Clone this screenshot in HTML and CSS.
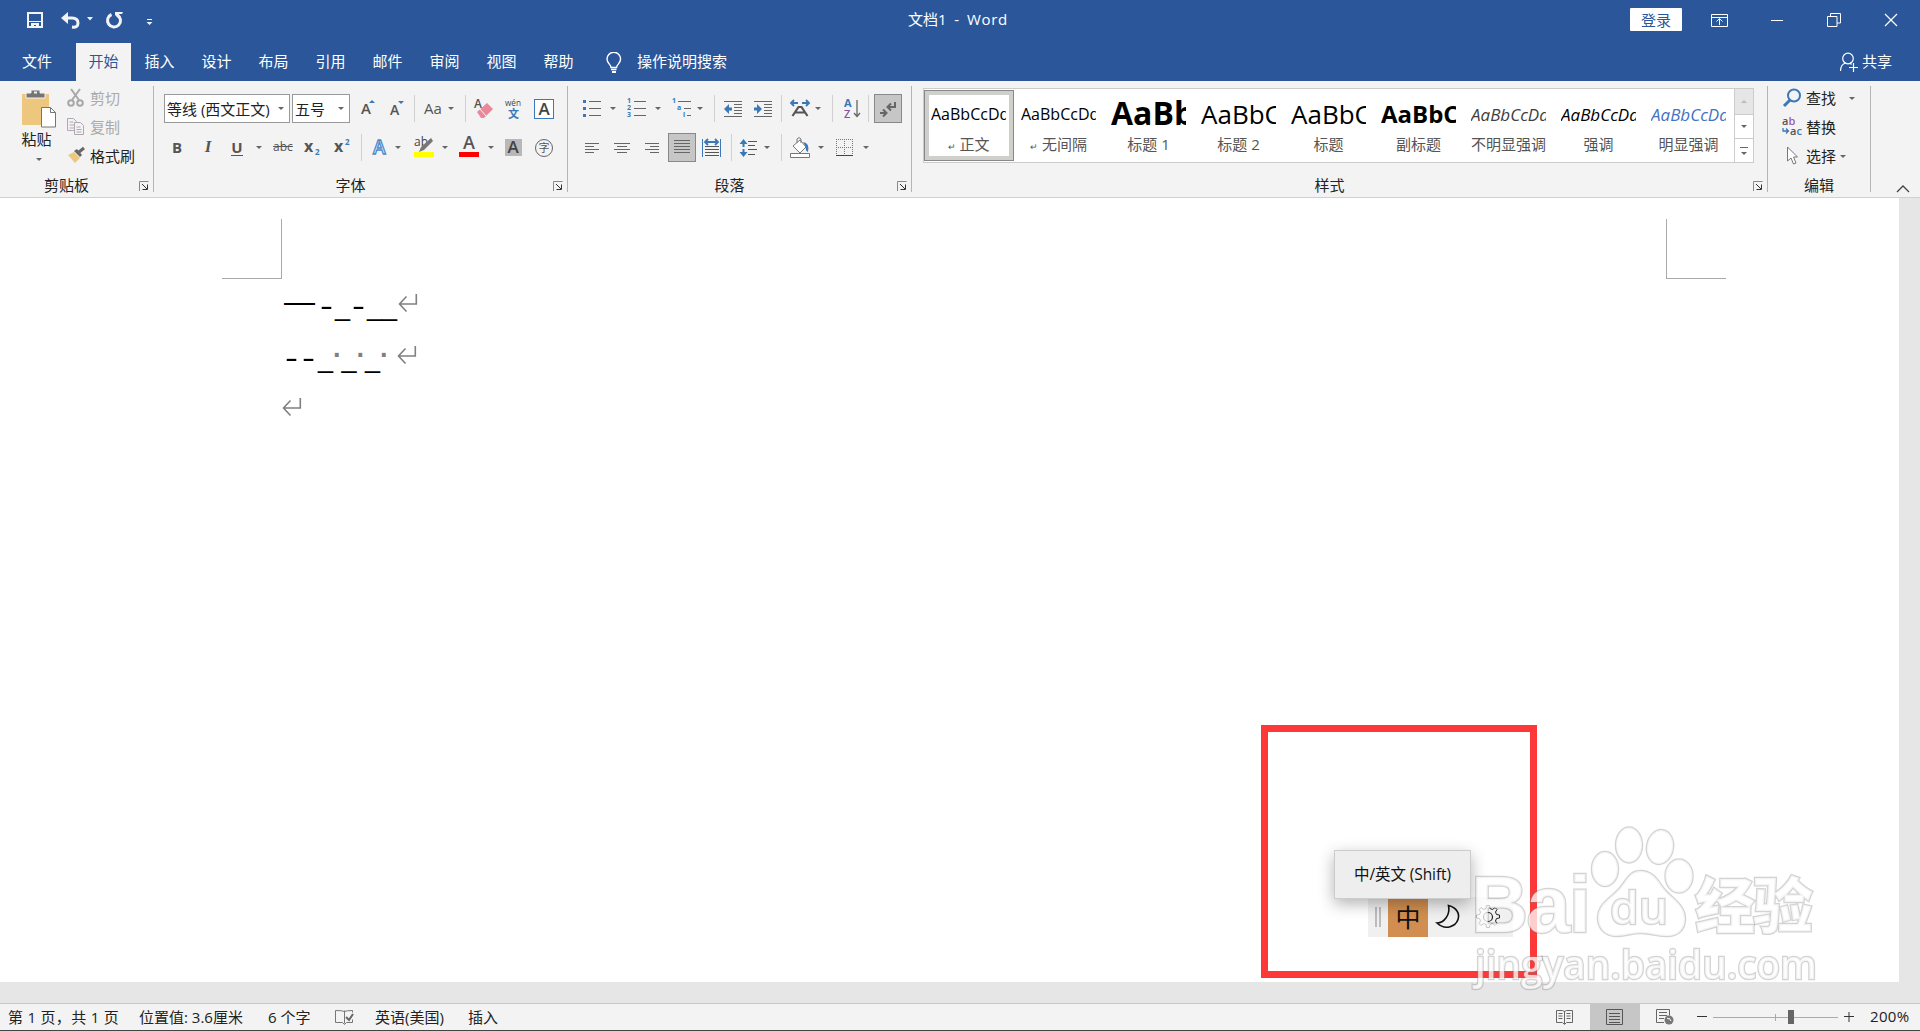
FILE: index.html
```html
<!DOCTYPE html>
<html lang="zh-CN">
  <head>
    <meta charset="UTF-8" />
    <title>文档1 - Word</title>
    <link rel="stylesheet" href="styles.css">
  </head>

  <body>
    <header class="titlebar">
      <div class="quick">
        <svg width="160" height="43" fill="none" stroke="#f3f3f3">
          <path d="M28 13h14v14h-14z" stroke-width="2" />
          <path d="M29 21.500h12" stroke-width="1" />
          <path d="M31 23h8v4h-3v-2h-2v2h-3z" fill="#f3f3f3" stroke="none" />
          <path d="M64 18h8q6 0 6 5t-6 4" stroke-width="3" />
          <path d="M61 18l7-6v12z" fill="#f3f3f3" stroke="none" />
          <path d="M87 17h6l-3 3.500z" fill="#f3f3f3" stroke="none" />
          <path d="M111.500 14.500a6.500 6.500 0 1 0 6 0.500" stroke-width="3" />
          <path d="M115 12h8l-1 2h-3l1 6l-5-5z" fill="#f3f3f3" stroke="none" />
          <path d="M147 19.500h5" stroke-width="1" />
          <path d="M146.500 22h6l-3 3z" fill="#f3f3f3" stroke="none" />
        </svg>
      </div>
      <div class="doc-name">文档1&nbsp; - &nbsp;<span>Word</span></div>
      <div class="win-tools">
        <button class="login">登录</button>
        <svg width="18" height="16" fill="none" stroke="#fff"><path d="M.5 2.500h16v12h-16zM.5 5.500h16M8.500 13V7M5.500 9.500l3-3 3 3" /></svg>
        <svg width="14" height="16"><path d="M1 8.500h12" stroke="#fff" /></svg>
        <svg width="14" height="16" fill="none" stroke="#fff"><path d="M.5 4.500h9.500v10h-9.500zM3.500 4.500v-3h10v9.500h-3.500" /></svg>
        <svg width="14" height="16"><path d="M1 2l12 12M13 2l-12 12" stroke="#fff" stroke-width="1.200" /></svg>
      </div>
    </header>

    <nav class="tabs">
      <span class="tab file">文件</span>
      <span class="tab active">开始</span>
      <span class="tab">插入</span>
      <span class="tab">设计</span>
      <span class="tab">布局</span>
      <span class="tab">引用</span>
      <span class="tab">邮件</span>
      <span class="tab">审阅</span>
      <span class="tab">视图</span>
      <span class="tab">帮助</span>
      <svg class="bulb" width="16" height="22" fill="none" stroke="#fff" stroke-width="1.400"><path d="M5 15.500c0-3-4-4-4-8.500a6.800 6.800 0 0 1 13.600 0c0 4.500-4 5.500-4 8.500zM5 17.500h5.500" /><path d="M6 20h4" stroke-width="2" /></svg>
      <span class="tell-me">操作说明搜索</span>
      <span class="share">
        <svg width="20" height="20" fill="none" stroke="#fff" stroke-width="1.200"><circle cx="9" cy="6.500" r="5.300" /><path d="M1.500 19c0-4 2-7 5-8M11 11l1.500 1.500M14.500 11v9M10 15.500h9" /></svg>
        共享
      </span>
    </nav>

    <section class="ribbon">
      <!-- 剪贴板 -->
      <div class="group clipboard">
        <div class="clip-body">
          <div class="paste">
            <svg width="36" height="40">
              <path d="M1 5h27v31h-27z" fill="#eec77f" />
              <path d="M5 9v-5h5v-3h9v3h5v5z" fill="#757575" stroke="#f3f3f3" />
              <path d="M13 3.500h3" stroke="#f3f3f3" stroke-width="2" />
              <path d="M20.500 18.500h9l5 5v14.500h-14z" fill="#fff" stroke="#757575" />
              <path d="M29.500 18.500v5h5" fill="none" stroke="#757575" />
            </svg>
            <span>粘贴</span>
            <i class="caret"></i>
          </div>
          <ul class="clip-list">
            <li class="off">
              <svg width="18" height="20" fill="none" stroke="#a8a8a8" stroke-width="2"><circle cx="4" cy="15" r="2.800" /><circle cx="13" cy="15" r="2.800" /><path d="M5 12l8-11M12 12l-8-11" /></svg>
              剪切
            </li>
            <li class="off">
              <svg width="18" height="20" fill="#f3f3f3" stroke="#b0a8b0"><path d="M.5 1.500h6l3 3v9h-9zM2.500 5h4M2.500 8h5M2.500 11h5" /><path d="M7.500 5.500h6l3 3v9h-9zM9.500 10h4M9.500 12.500h5M9.500 15h5" /></svg>
              复制
            </li>
            <li>
              <svg width="18" height="20"><path d="M1 9l6-3 6 6-5 5z" fill="#eec77f" /><path d="M7 5l3-2 5 6-2 2z" fill="#666" /><path d="M12 6l5-4" stroke="#666" stroke-width="3" /></svg>
              格式刷
            </li>
          </ul>
        </div>
        <div class="label"><span>剪贴板</span><svg class="launch" width="12" height="12"><use href="#launch" /></svg></div>
      </div>

      <!-- 字体 -->
      <div class="group font">
        <div class="row font-row1">
          <span class="combo">等线 (西文正文)<i class="caret"></i></span>
          <span></span>
          <span class="combo">五号<i class="caret"></i></span>
          <svg width="32" height="28"><text class="ico" x="11" y="19" font-size="15">A</text><path d="M19 8h6l-3-3z" fill="#3a78b8" /></svg>
          <svg width="28" height="28"><text class="ico" x="8" y="20" font-size="14">A</text><path d="M16 6h6l-3 3z" fill="#3a78b8" /></svg>
          <i class="sep"></i>
          <span class="ico-text">Aa</span>
          <i class="caret"></i>
          <i class="sep"></i>
          <svg width="22" height="28"><text class="ico" x="1" y="13" font-size="12">A</text><path d="M4 17l10-9 6 6-9 9h-3z" fill="#e8889a" /><path d="M7 14l6 7" stroke="#f3f3f3" /></svg>
          <svg width="24" height="28"><text x="4" y="11" font-size="9" textLength="16" lengthAdjust="spacingAndGlyphs" fill="#444">wén</text><text x="7" y="23" font-size="11" font-weight="700" fill="#3a78b8">文</text></svg>
          <span class="boxed">A</span>
        </div>
        <div class="row font-row2">
          <b class="ico-text">B</b>
          <b class="ico-text italic">I</b>
          <b class="ico-text under">U</b>
          <i class="caret"></i>
          <span class="ico-text strike">abc</span>
          <svg width="20" height="28"><text class="ico bold" x="1" y="18" font-size="16">x</text><text x="12" y="21" font-size="8" font-weight="700" fill="#3a78b8">2</text></svg>
          <svg width="20" height="28"><text class="ico bold" x="1" y="18" font-size="16">x</text><text x="12" y="11" font-size="8" font-weight="700" fill="#3a78b8">2</text></svg>
          <i class="sep"></i>
          <svg width="24" height="28"><text x="5" y="20" font-size="19" font-weight="600" fill="#fff" stroke="#4a8ace" stroke-width="1.300">A</text></svg>
          <i class="caret"></i>
          <svg width="36" height="28"><text x="11" y="12" font-size="12" fill="#444">ab</text><path d="M16 18l2-5 10-9 2 3-9 9z" fill="#777" /><path d="M11 18h20v5h-20z" fill="#ff0" /></svg>
          <i class="caret"></i>
          <svg width="36" height="28"><text class="ico" x="12" y="15" font-size="18">A</text><path d="M8 18h20v5h-20z" fill="#f00" /></svg>
          <i class="caret"></i>
          <span class="shaded">A</span>
          <svg width="20" height="28"><circle cx="10" cy="14" r="8.500" fill="none" stroke="#666" /><text x="4.500" y="18" font-size="11" fill="#555">字</text></svg>
        </div>
        <div class="label"><span>字体</span><svg class="launch" width="12" height="12"><use href="#launch" /></svg></div>
      </div>

      <!-- 段落 -->
      <div class="group para">
        <div class="row para-row1">
          <svg width="40" height="28"><path d="M15 5h3v3h-3zM15 12h3v3h-3zM15 19h3v3h-3z" fill="#3a78b8" /><path d="M21 6.500h12M21 13.500h12M21 20.500h12" stroke="#666" /></svg>
          <i class="caret"></i>
          <svg width="35" height="28"><text class="num" x="9" y="8">1</text><text class="num" x="9" y="15">2</text><text class="num" x="9" y="22">3</text><path d="M16 6.500h12M16 13.500h12M16 20.500h12" stroke="#666" /></svg>
          <i class="caret"></i>
          <svg width="32" height="28"><text class="num" x="9" y="8">1</text><text class="num" x="14" y="15">a</text><text class="num" x="20" y="22">i</text><path d="M15 6.500h13M21 13.500h7M24 20.500h4" stroke="#666" /></svg>
          <i class="caret"></i>
          <i class="sep"></i>
          <svg width="18" height="28"><path d="M0 6.500h18M10 9.500h8M10 12.500h8M10 15.500h8M10 18.500h8M0 21.500h18" stroke="#666" /><path d="M0 14l5-5v3.500h3v3h-3v3.500z" fill="#3a78b8" /></svg>
          <svg width="34" height="28"><path d="M12 6.500h18M22 9.500h8M22 12.500h8M22 15.500h8M22 18.500h8M12 21.500h18" stroke="#666" /><path d="M20 14l-5-5v3.500h-3v3h3v3.500z" fill="#3a78b8" /></svg>
          <i class="sep"></i>
          <svg width="27" height="28" fill="none" stroke="#3a78b8" stroke-width="1.800"><path d="M12 8h-7M8 5l-3 3 3 3M16 8h7M20 5l3 3-3 3" /><path d="M6.500 21l6-9h3l6 9M9.500 17.500h9" stroke="#555" stroke-width="2.200" /></svg>
          <i class="caret"></i>
          <i class="sep"></i>
          <svg width="21" height="28"><text x="3" y="12" font-size="11" font-weight="700" fill="#3a78b8">A</text><text x="3" y="23" font-size="11" font-weight="600" fill="#8a4fa8">Z</text><path d="M16 5v16M13 18l3 3.500 3-3.500" fill="none" stroke="#666" stroke-width="1.300" /></svg>
          <i class="sep"></i>
          <span class="pressed"><svg width="26" height="27" fill="none" stroke="#666" stroke-width="2"><path d="M20 7v5h-7M16 8.500l-3.500 3.500 3.500 3.500M5 18h6M8 14.500l3.500 3.500-3.500 3.500" /></svg></span>
        </div>
        <div class="row para-row2">
          <svg width="38" height="28" stroke="#666"><path d="M17 9.500h14M17 12.500h9M17 15.500h14M17 18.500h9" /></svg>
          <svg width="32" height="28" stroke="#666"><path d="M8 9.500h16M11 12.500h10M8 15.500h16M11 18.500h10" /></svg>
          <svg width="28" height="28" stroke="#666"><path d="M7 9.500h14M12 12.500h9M7 15.500h14M12 18.500h9" /></svg>
          <i></i>
          <span class="pressed"><svg width="26" height="27" stroke="#666"><path d="M5 6.500h16M5 9.500h16M5 12.500h16M5 15.500h16M5 18.500h16" /></svg></span>
          <svg width="30" height="28"><path d="M6.500 5v18M24.500 5v18" stroke="#3a78b8" /><path d="M9 8h13M12 5l-3 3 3 3M19 5l3 3-3 3" fill="none" stroke="#3a78b8" stroke-width="1.800" /><path d="M9 12.500h14M9 15.500h14M9 18.500h14M9 21.500h14" stroke="#555" /></svg>
          <i class="sep"></i>
          <svg width="26" height="28"><path d="M3.500 10l4-5 4 5zM3.500 18l4 5 4-5z" fill="#3a78b8" /><path d="M7.500 8v12" stroke="#3a78b8" stroke-width="2" stroke-dasharray="5 2" /><path d="M12 7.500h9M12 11.500h7M12 15.500h9M12 20.500h7" stroke="#555" /></svg>
          <i class="caret"></i>
          <i class="sep"></i>
          <svg width="26" height="28"><path d="M3 12l7-6 6 7-6 6z" fill="#fff" stroke="#777" /><path d="M7 9v-4q2-3 4 0v4" fill="none" stroke="#777" /><path d="M13 8q7 1 5 10-3-1-2-5z" fill="#3a78b8" /><path d="M.5 19.500h19v4h-19z" fill="#fff" stroke="#777" /></svg>
          <i class="caret"></i>
          <svg width="35" height="28" fill="none" stroke="#777"><path d="M10 5.500h17M10.500 5v17M26.500 5v17M18.500 5v17M10 13.500h17" stroke-dasharray="1 1" /><path d="M10 21.500h17" stroke="#444" /></svg>
          <i class="caret"></i>
        </div>
        <div class="label"><span>段落</span><svg class="launch" width="12" height="12"><use href="#launch" /></svg></div>
      </div>

      <!-- 样式 -->
      <div class="group styles">
        <div class="gallery">
          <div class="style picked"><p>AaBbCcDd</p><em><small>↵</small> 正文</em></div>
          <div class="style"><p>AaBbCcDd</p><em><small>↵</small> 无间隔</em></div>
          <div class="style"><p class="h1">AaBb</p><em>标题 1</em></div>
          <div class="style"><p class="h2">AaBbC</p><em>标题 2</em></div>
          <div class="style"><p class="h2">AaBbC</p><em>标题</em></div>
          <div class="style"><p class="subtitle">AaBbC</p><em>副标题</em></div>
          <div class="style"><p class="slant grey">AaBbCcDd</p><em>不明显强调</em></div>
          <div class="style"><p class="slant">AaBbCcDd</p><em>强调</em></div>
          <div class="style"><p class="slant blue">AaBbCcDd</p><em>明显强调</em></div>
          <div class="scroller">
            <span class="dim"><i class="caret up"></i></span>
            <span><i class="caret"></i></span>
            <span class="more"><i class="caret"></i></span>
          </div>
        </div>
        <div class="label"><span>样式</span><svg class="launch" width="12" height="12"><use href="#launch" /></svg></div>
      </div>

      <!-- 编辑 -->
      <div class="group edit">
        <ul class="edit-list">
          <li>
            <svg width="20" height="20" fill="none" stroke="#3a78b8"><circle cx="12" cy="7.500" r="6" stroke-width="2" /><path d="M8 12l-6 6" stroke-width="3" /></svg>
            查找<i class="caret far"></i>
          </li>
          <li>
            <svg width="20" height="20"><text x="0" y="8" font-size="11" font-weight="600" fill="#555">a<tspan fill="#9b59b6">b</tspan></text><text x="8" y="18" font-size="11" font-weight="600" fill="#555">a<tspan fill="#3a78b8">c</tspan></text><path d="M1 11v3h5M4 11.500l2.500 2.500-2.500 2.500" fill="none" stroke="#3a78b8" stroke-width="1.300" /></svg>
            替换
          </li>
          <li>
            <svg width="20" height="20"><path d="M5.500 1v14l3.500-3 2.500 6 2.500-1-2.500-6h4z" fill="#fff" stroke="#777" /></svg>
            选择<i class="caret"></i>
          </li>
        </ul>
        <div class="label"><span>编辑</span></div>
      </div>
      <svg class="collapse" width="14" height="10"><path d="M1 8l6-6 6 6" fill="none" stroke="#444" stroke-width="1.300" /></svg>
    </section>

    <main class="workspace">
      <div class="page">
        <div class="crops"><i class="crop left"></i><i class="crop right"></i></div>
        <div class="text">
          <p><span class="em">—</span><span class="hy">-</span><span class="lo">_</span><span class="hy">-</span><span class="lo">_</span><span class="lo">_</span><svg class="ret" width="20" height="20"><use href="#ret" /></svg></p>
          <p class="second"><span class="hy">-</span><span class="hy">-</span><span class="lo">_</span><span class="dot">·</span><span class="lo">_</span><span class="dot">·</span><span class="lo">_</span><span class="dot last">·</span><svg class="ret" width="20" height="20"><use href="#ret" /></svg></p>
          <p class="third"><svg class="ret" width="20" height="20"><use href="#ret" /></svg></p>
        </div>
      </div>
    </main>

    <footer class="status">
      <div class="status-left">
        <span class="pages">第 1 页，共 1 页</span>
        <span>位置值: 3.6厘米</span>
        <span>6 个字</span>
        <svg width="20" height="18" fill="none" stroke="#777"><path d="M9.500 2.500v13M9.500 3.500q-2-1-9-1v12h7l2 2 2-2h6v-3M9.500 3.500q2-1 8-1v2" /><path d="M11 9l3 3 4-6" stroke="#666" stroke-width="2" /></svg>
        <span>英语(美国)</span>
        <span>插入</span>
      </div>
      <div class="status-right">
        <span class="view"><svg width="18" height="18" fill="none" stroke="#666"><path d="M.5 2.500h6l2 1 2-1h6v12h-6l-2 2-2-2h-6zM8.500 3v13M2.500 5.500h4M2.500 8h4M2.500 10.500h4M10.500 5.500h4M10.500 8h4M10.500 10.500h4" /></svg></span>
        <span class="view on"><svg width="18" height="18" fill="none" stroke="#555"><path d="M.5 1.500h16v15h-16zM3 5.500h11M3 8.500h11M3 11.500h11M3 14.500h11" /></svg></span>
        <span class="view"><svg width="18" height="18" fill="none" stroke="#666"><path d="M8 14.500h-7.500v-13h13v6M3 4.500h8M3 7.500h8M3 10.500h5" /><circle cx="13" cy="12" r="4.500" fill="#777" stroke="none" /><path d="M11 10q2 2 2 0l2 3" stroke="#fff" /></svg></span>
        <svg class="zoom" width="162" height="26">
          <path d="M2 12.500h10M149 12.500h10M154 8v10" stroke="#333" />
          <path d="M18 13.500h125M80.500 10v7" stroke="#aaa" />
          <path d="M93 6h6v14h-6z" fill="#666" />
        </svg>
        <span class="percent">200%</span>
      </div>
    </footer>

    <!-- 输入法 -->
    <div class="marker"></div>
    <div class="ime">
      <svg class="grip" width="20" height="40"><path d="M8 10v20M12 10v20" stroke="#b0b0b0" stroke-width="1.600" /></svg>
      <span class="lang">中</span>
      <svg width="40" height="40"><path d="M20.500 8.500c8 2 11.500 8 9.500 14s-12 12-21 3.500c7 0 13.500-8 11.500-17.500z" fill="none" stroke="#111" stroke-width="1.600" /></svg>
      <svg width="44" height="40" viewBox="-2 0 44 40" fill="none" stroke="#222"><circle cx="18" cy="20" r="4.500" stroke-width="1.200" /><path d="M16.500 8.500h3l.5 3 2.500 1 2.500-2 2 2-1.500 2.500 1 2.500 3 .5v3l-3 .5-1 2.500 1.500 2.500-2 2-2.500-2-2.500 1-.5 3h-3l-.5-3-2.500-1-2.500 2-2-2 1.500-2.500-1-2.500-3-.5v-3l3-.5 1-2.500-1.500-2.500 2-2 2.500 2 2.500-1z" /></svg>
    </div>
    <div class="tip">中/英文 (Shift)</div>

    <svg class="watermark" width="360" height="190">
      <text x="1" y="122" font-family="Liberation Sans" font-size="79" font-weight="700" textLength="120">Bai</text>
      <ellipse cx="135" cy="59" rx="13" ry="17" />
      <ellipse cx="159" cy="35" rx="13" ry="17.500" />
      <ellipse cx="190" cy="37" rx="13" ry="17" transform="rotate(10 190 37)" />
      <ellipse cx="209" cy="66" rx="13.500" ry="16.500" />
      <path d="M171 61c12 0 17 10 23 18s21 15 21 30c0 12-9 18-20 17-9 0-14-3-24-3s-15 3-25 3c-11 0-18-8-18-18 0-15 14-20 22-30s10-17 21-17z" />
      <text x="140" y="114" font-family="Open Sans" font-size="45" font-weight="600" textLength="58" lengthAdjust="spacingAndGlyphs">du</text>
      <text x="225" y="118" font-family="Noto Sans CJK SC" font-size="60" font-weight="900" textLength="118">经验</text>
      <text x="5" y="169" font-family="Open Sans" font-size="40" font-weight="600" textLength="342" lengthAdjust="spacingAndGlyphs">jingyan.baidu.com</text>
    </svg>

    <svg class="defs" width="0" height="0">
      <defs>
        <g id="launch" fill="none" stroke="#555"><path d="M1.500 11v-9.500h9" stroke="#888" /><path d="M4 4l5 5M9.500 4.500v5h-5" stroke="#333" /></g>
        <g id="ret" fill="none" stroke="#808080" stroke-width="1.600"><path d="M18.300 1v10h-16.500M8.500 3.500l-7 7.500 7 7.500" /></g>
      </defs>
    </svg>
  </body>
</html>
```

FILE: styles.css
```css
html,
body {
  margin: 0;
  height: 100%;
  overflow: hidden;
}

body {
  display: flex;
  flex-direction: column;
  background: #e6e6e6;
  color: #222;
  font-family: "Open Sans", "Noto Sans CJK SC", sans-serif;
  font-size: 15px;
  line-height: 20px;
}

svg {
  display: block;
  flex: none;
}

p,
ul {
  margin: 0;
  padding: 0;
  list-style: none;
}

.defs {
  position: absolute;
}

/* title bar */
.titlebar {
  display: flex;
  justify-content: space-between;
  height: 43px;
  background: #2b579a;
  color: #fff;
}

.quick {
  display: flex;
  width: 908px;
}

.doc-name {
  flex: 1;
  padding-top: 9px;
  white-space: nowrap;
}

.doc-name span {
  letter-spacing: 0.7px;
}

.win-tools {
  display: flex;
  width: 290px;
  height: 23px;
  padding-top: 8px;
  align-items: center;
}

.win-tools svg:nth-of-type(1) {
  margin-left: 29px;
}

.win-tools svg:nth-of-type(2) {
  margin-left: 41px;
}

.win-tools svg:nth-of-type(3),
.win-tools svg:nth-of-type(4) {
  margin-left: 43px;
}

.login {
  width: 52px;
  height: 23px;
  padding: 0;
  border: none;
  border-radius: 1px;
  background: #fff;
  color: #2b579a;
  font: inherit;
}

/* tabs */
.tabs {
  display: flex;
  height: 38px;
  background: #2b579a;
  color: #fff;
  line-height: 37px;
}

.tab {
  width: 57px;
  text-align: center;
}

.tab.file {
  width: 74px;
  padding-right: 2px;
}

.tab.active {
  width: 55px;
  background: #f3f3f3;
  color: #2b579a;
}

.bulb {
  margin: 9px 15px 0 19px;
}

.share {
  display: flex;
  gap: 3px;
  margin-left: auto;
  padding-right: 28px;
}

.share svg {
  margin-top: 9px;
}

/* ribbon */
.ribbon {
  display: flex;
  height: 116px;
  border-bottom: 1px solid #d0d0d0;
  background: #f3f3f3;
}

.group {
  display: flex;
  flex-direction: column;
  box-sizing: border-box;
  height: 106px;
  margin-top: 5px;
  padding-top: 8px;
  border-right: 1px solid #b5b5b5;
}

.label {
  display: flex;
  height: 12px;
  margin-top: auto;
  line-height: 11px;
}

.label span {
  flex: 1;
  text-align: center;
}

.launch {
  width: 20px;
  height: 12px;
  padding-left: 5px;
  box-sizing: border-box;
}

.row {
  display: grid;
  height: 29px;
  margin-bottom: 10px;
  align-items: center;
  justify-items: center;
}

.caret {
  width: 0;
  height: 0;
  border: 3px solid transparent;
  border-top-color: #666;
  border-bottom: none;
}

.sep {
  width: 1px;
  height: 27px;
  background: #d0d0d0;
}

.ico {
  font-weight: 600;
  fill: #555;
}

.ico.bold {
  font-weight: 700;
}

.num {
  font-size: 7px;
  font-weight: 700;
  fill: #3a78b8;
}

.ico-text {
  padding-bottom: 2px;
  color: #555;
  line-height: 18px;
}

.italic {
  font-family: "Liberation Serif", serif;
  font-size: 17px;
  font-style: italic;
}

.under {
  padding: 0;
  border-bottom: 1px solid #555;
  line-height: 15px;
}

.strike {
  font-size: 12px;
  text-decoration: line-through;
}

.boxed,
.shaded {
  box-sizing: border-box;
  width: 20px;
  height: 20px;
  border: 1px solid #3a78b8;
  background: #fff;
  color: #444;
  font-size: 17px;
  font-weight: 600;
  line-height: 17px;
  text-align: center;
}

.shaded {
  width: 17px;
  height: 17px;
  border: none;
  background: #b8b8b8;
  line-height: 15px;
}

.pressed {
  box-sizing: border-box;
  width: 28px;
  height: 29px;
  border: 1px solid #888;
  background: #c6c6c6;
}

.clipboard {
  width: 154px;
  padding-top: 2px;
}

.clip-body {
  display: flex;
}

.paste {
  display: flex;
  flex-direction: column;
  align-items: center;
  width: 66px;
  padding-left: 11px;
  margin-right: -9px;
  box-sizing: border-box;
}

.paste svg {
  margin-top: 1px;
}

.paste span {
  margin: 0 4px 9px 0;
}

.clip-list li {
  display: flex;
  align-items: center;
  gap: 5px;
  height: 20px;
  margin-bottom: 9px;
  padding-left: 10px;
}

.off {
  color: #aaa;
}

.font {
  width: 414px;
  padding-left: 10px;
}

.font .label {
  margin-left: -10px;
}

.font-row1 {
  grid-template-columns: 126px 2px 58px 32px 28px 8px 30px 6px 22px 16px 42px 20px;
}

.font-row2 {
  grid-template-columns: 26px 36px 22px 22px 26px 34px 26px 11px 26px 10px 36px 12px 36px 7px 38px 24px;
}

.combo {
  display: flex;
  align-items: center;
  justify-content: space-between;
  box-sizing: border-box;
  width: 100%;
  height: 29px;
  padding: 0 5px 0 2px;
  border: 1px solid #999;
  background: #fff;
  line-height: 26px;
  white-space: nowrap;
}

.para {
  width: 344px;
}

.para-row1 {
  grid-template-columns: 40px 10px 35px 10px 32px 10px 19px 18px 34px 10px 27px 10px 18px 21px 12px 28px;
}

.para-row2 {
  grid-template-columns: 38px 32px 28px 2px 28px 30px 10px 26px 10px 18px 26px 10px 35px 10px;
}

.styles {
  width: 856px;
  padding-top: 2px;
}

.gallery {
  display: flex;
  box-sizing: border-box;
  width: 831px;
  height: 75px;
  margin-left: 11px;
  border: 1px solid #ccc;
  background: #fff;
}

.style {
  box-sizing: border-box;
  width: 90px;
  height: 71px;
  margin-top: 1px;
  padding: 6px 8px 0 7px;
  text-align: center;
}

.style p {
  height: 36px;
  overflow: hidden;
  color: #000;
  font-size: 16px;
  line-height: 37px;
  text-align: left;
  white-space: nowrap;
}

.style em {
  display: block;
  margin: 2px -6px 0;
  color: #555;
  font-style: normal;
  white-space: nowrap;
}

.style small {
  font-size: 9px;
}

.style.picked {
  box-shadow: inset 0 0 0 1px #888, inset 0 0 0 5px #cfcfcb;
}

.style .h1 {
  font-size: 32px;
  font-weight: 700;
  line-height: 33px;
}

.style .h2 {
  font-size: 26px;
  line-height: 36px;
}

.style .subtitle {
  font-size: 24px;
  font-weight: 700;
  line-height: 36px;
}

.style .slant {
  font-size: 17px;
  font-style: italic;
}

.style .grey {
  color: #404040;
}

.style .blue {
  color: #4472c4;
}

.scroller {
  display: grid;
  flex: 1;
  grid-template-rows: 25px 24px 24px;
  border-left: 1px solid #ccc;
}

.scroller span {
  display: flex;
  flex-direction: column;
  align-items: center;
  justify-content: center;
}

.scroller span + span {
  border-top: 1px solid #ccc;
}

.scroller .dim {
  background: #e6e6e6;
}

.scroller .more::before {
  width: 8px;
  height: 1px;
  margin-bottom: 4px;
  background: #666;
  content: "";
}

.caret.up {
  border-top: none;
  border-bottom: 3px solid #bbb;
}

.edit {
  width: 103px;
  padding-top: 2px;
}

.edit-list li {
  display: flex;
  align-items: center;
  height: 20px;
  margin-bottom: 9px;
  padding-left: 14px;
  white-space: nowrap;
}

.edit-list svg {
  margin-right: 4px;
}

.edit-list .caret {
  margin-left: 4px;
}

.edit-list .far {
  margin-left: 13px;
}

.collapse {
  margin: 103px 0 0 25px;
}

/* document */
.workspace {
  flex: 1;
}

.page {
  width: 1899px;
  height: 784px;
  background: #fff;
}

.crops {
  display: flex;
  justify-content: space-between;
  width: 1504px;
  padding: 21px 0 0 222px;
}

.crop {
  width: 59px;
  height: 59px;
  border-bottom: 1px solid #aaa;
}

.crop.left {
  border-right: 1px solid #aaa;
}

.crop.right {
  border-left: 1px solid #aaa;
}

.text {
  padding: 14px 0 0 284px;
  color: #000;
  font-family: "Liberation Sans", sans-serif;
}

.text p {
  display: flex;
  height: 52px;
  font-size: 27px;
  line-height: 26px;
}

.text .third {
  margin-left: -2px;
}

.text span {
  text-align: center;
}

.text .em {
  width: 34px;
  font-size: 31px;
  line-height: 18px;
  text-align: left;
}

.text .second .hy {
  margin-left: -1px;
  margin-right: 1px;
}

.text .hy {
  width: 17px;
  transform: scaleX(1.45);
}

.text .lo {
  width: 15px;
}

.text .lo:last-of-type {
  margin-right: 1px;
}

.text .dot {
  width: 8.500px;
  color: #808080;
  font-weight: 700;
  line-height: 20px;
}

.text .last {
  width: 17px;
  text-align: left;
}

/* status bar */
.status {
  display: flex;
  justify-content: space-between;
  height: 26px;
  border-top: 1px solid #c6c6c6;
  border-bottom: 1px solid #444;
  background: #f3f3f3;
  line-height: 25px;
}

.status-left {
  display: grid;
  grid-template-columns: 131px 129px 67px 40px 93px 60px;
  align-items: center;
  padding-left: 8px;
  white-space: nowrap;
}

.pages {
  letter-spacing: 0.3px;
}

.status-right {
  display: flex;
  width: 380px;
}

.view {
  display: flex;
  align-items: center;
  justify-content: center;
  width: 50px;
}

.view.on {
  background: #c6c6c6;
}

.zoom {
  margin-left: 5px;
}

.percent {
  margin-left: 13px;
  letter-spacing: 0.3px;
}

/* on top of the document */
.marker {
  position: absolute;
  top: 725px;
  left: 1261px;
  box-sizing: border-box;
  width: 276px;
  height: 253px;
  border: 7px solid #fd3838;
}

.ime {
  position: absolute;
  top: 897px;
  left: 1368px;
  display: flex;
  width: 145px;
  height: 40px;
  background: #f0f0f0;
}

.lang {
  width: 40px;
  background: #d18e50;
  color: #111;
  font-size: 25px;
  line-height: 41px;
  text-align: center;
}

.tip {
  position: absolute;
  top: 850px;
  left: 1334px;
  box-sizing: border-box;
  width: 137px;
  height: 49px;
  border: 1px solid #ccc;
  background: #eee;
  box-shadow: 0 5px 16px rgba(0, 0, 0, 0.3);
  color: #111;
  font-size: 15.500px;
  letter-spacing: -0.1px;
  line-height: 46px;
  text-align: center;
}

.watermark {
  position: absolute;
  top: 810px;
  left: 1470px;
  fill: rgba(255, 255, 255, 0.75);
  stroke: rgba(130, 130, 130, 0.35);
  stroke-width: 2.500px;
  paint-order: stroke;
  filter: blur(0.6px);
}
```
